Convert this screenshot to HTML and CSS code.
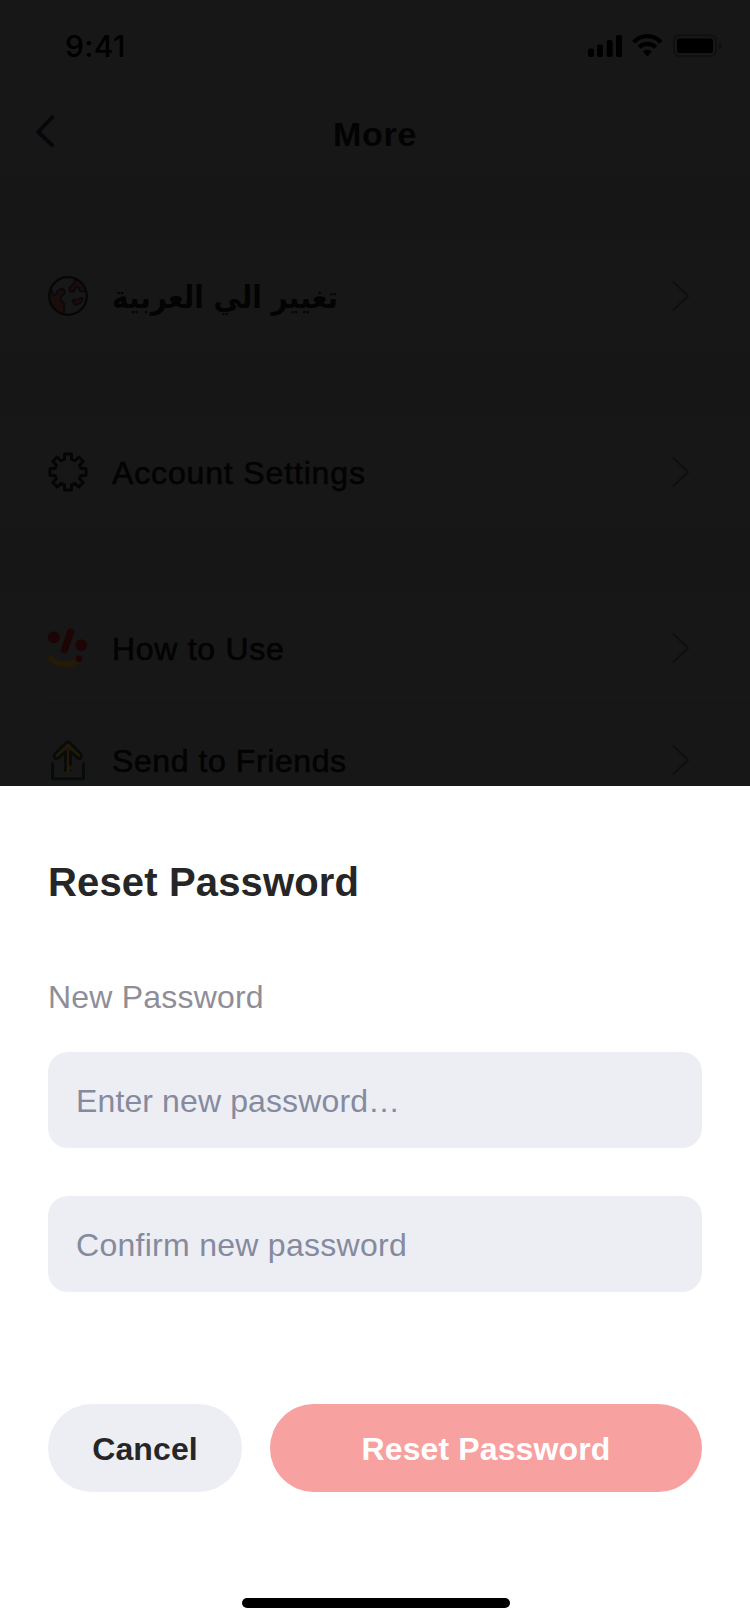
FILE: index.html
```html
<!DOCTYPE html>
<html lang="en">
<head>
<meta charset="utf-8">
<title>More</title>
<link rel="stylesheet" href="styles.css">
</head>
<body>
<div class="screen">
  <main class="page">
    <header class="top">
      <div class="status">
        <span class="time">9:41</span>
        <svg class="status-icons" width="136" height="24" viewBox="0 0 136 24">
          <rect x="0" y="14.5" width="6" height="8.5" rx="2"/>
          <rect x="9" y="10.5" width="6" height="12.5" rx="2"/>
          <rect x="18.700" y="6" width="6" height="17" rx="2"/>
          <rect x="28" y="1" width="6" height="22" rx="2"/>
          <g class="wifi">
            <path d="M45.700 8.200C53.500 .2 65.200 .2 73 8.200"/>
            <path d="M51 13.300C55.600 8.800 63.100 8.800 67.700 13.300"/>
          </g>
          <path d="M54.800 17.300C57.300 15.100 61.400 15.100 63.900 17.300L59.350 22.600Z"/>
          <rect class="shell" x="86" y="1.200" width="42" height="21" rx="5.500"/>
          <rect x="89" y="4.500" width="36" height="14.500" rx="2.500"/>
          <path class="cap" d="M131 8.200Q133.500 9.500 133.500 11.800T131 15.400Z"/>
        </svg>
      </div>
      <div class="nav">
        <svg class="back" width="20" height="34" viewBox="0 0 20 34"><path d="M16.200 2.200L2.200 17L16.200 30.200"/></svg>
        <h1 class="nav-title">More</h1>
      </div>
    </header>

    <section class="group">
      <div class="row">
        <svg class="icon" width="42" height="42" viewBox="0 -1 42 42">
          <g fill="#1c0d0c" stroke-linejoin="round" stroke-linecap="round">
            <path d="M4 15C4 20 8.500 19.500 9 16.500S13.500 12 15.500 13.500S17 18 14.500 19.500S11.500 24.500 14.500 26S16.500 28.500 16 31S17 35 16 37C8 35 2.500 28 2.500 21Z"/>
            <path d="M27 3.500C28 7.500 21.500 9.500 21.300 13C21.500 17 27 16.500 26.500 13C29 9.500 31.500 11.500 31.500 14C33 17.500 35.500 14 37 15.500C35.500 9.500 32 5.500 27 3.500Z"/>
            <g class="coast">
              <path d="M4 15C4 20 8.500 19.500 9 16.500S13.500 12 15.500 13.500S17 18 14.500 19.500S11.500 24.500 14.500 26S16.500 28.500 16 31S17 35 16 36"/>
              <path d="M27 4C28 7.500 21.500 9.500 21.300 13C21.500 17 27 16.500 26.500 13C29 9.500 31.500 11.500 31.500 14C33 17.500 35.500 14 36.500 15.500"/>
              <path d="M24.500 24.500C26 22.500 28.500 25 31 23C33.500 21 36 22.500 34 24.500C31 29.500 27 29.500 25.500 27Z"/>
            </g>
          </g>
          <circle cx="20" cy="20" r="18.800" fill="none" stroke="#060607" stroke-width="2.200"/>
        </svg>
        <span class="label arabic" lang="ar" dir="rtl">تغيير الي العربية</span>
        <svg class="chevron" width="18" height="32" viewBox="0 0 18 32"><path d="M1 1.500L16 16L1 30.500"/></svg>
      </div>
    </section>

    <section class="group">
      <div class="row">
        <svg class="icon" width="42" height="42" viewBox="0 -1 42 42">
          <circle cx="20" cy="20" r="9.500" fill="none" stroke="#14171a" stroke-width="1.500"/>
          <path d="M16.500 2H23.500V7.200L27 8.700L30.800 5L35.200 9.500L31.500 13.200L33 16.600H38V23.400H33L31.500 26.800L35.200 30.500L30.800 35L27 31.300L23.500 32.800V38H16.500V32.800L13 31.300L9.200 35L4.800 30.500L8.500 26.800L7 23.400H2V16.600H7L8.500 13.200L4.800 9.500L9.200 5L13 8.700L16.500 7.200Z" fill="none" stroke="#050505" stroke-width="3" stroke-linejoin="round"/>
        </svg>
        <span class="label wide">Account Settings</span>
        <svg class="chevron" width="18" height="32" viewBox="0 0 18 32"><path d="M1 1.500L16 16L1 30.500"/></svg>
      </div>
    </section>

    <section class="group">
      <div class="row divided">
        <svg class="icon" width="42" height="42" viewBox="0 0 42 42">
          <g fill="#1d0405" stroke="#1d0405" stroke-linecap="round">
            <path d="M3 31.500C11 39.500 22 39.500 30.500 32" fill="none" stroke="#241a05" stroke-width="6"/>
            <circle cx="5.900" cy="10.400" r="5.900" stroke="none"/>
            <circle cx="33.300" cy="18.200" r="5.800" stroke="none"/>
            <circle cx="31" cy="31.700" r="3.300" stroke="none"/>
            <path d="M22.700 5L16.500 22.600" stroke-width="7"/>
          </g>
        </svg>
        <span class="label">How to Use</span>
        <svg class="chevron" width="18" height="32" viewBox="0 0 18 32"><path d="M1 1.500L16 16L1 30.500"/></svg>
      </div>
      <div class="row">
        <svg class="icon" width="42" height="42" viewBox="0 -.8 42 42">
          <path d="M19.900 13V31M8.500 15L19.900 4L31.500 15" fill="none" stroke="#251b05" stroke-width="4.500" stroke-linecap="round"/>
          <g fill="none" stroke="#070b0b" stroke-width="2.800" stroke-linejoin="round" stroke-linecap="round">
            <path d="M17.400 31V12L10 18.500C7 19.800 5 16.500 7 14L18.200 3Q20 1.400 21.700 3L32.800 14C34.500 16.500 32.500 19.800 30 18.500L22.500 12V25"/>
            <path d="M4.500 23.500V39H35.500V23.500"/>
          </g>
          <circle cx="22.500" cy="30.700" r="1.100" fill="#070b0b"/>
        </svg>
        <span class="label narrow">Send to Friends</span>
        <svg class="chevron" width="18" height="32" viewBox="0 0 18 32"><path d="M1 1.500L16 16L1 30.500"/></svg>
      </div>
    </section>
  </main>

  <section class="sheet">
    <h2 class="sheet-title">Reset Password</h2>
    <div class="caption">New Password</div>
    <div class="field"><span class="hint-enter">Enter new password…</span></div>
    <div class="field"><span class="hint-confirm">Confirm new password</span></div>
    <div class="actions">
      <button class="button cancel">Cancel</button>
      <button class="button primary">Reset Password</button>
    </div>
    <div class="home-bar"></div>
  </section>
</div>
</body>
</html>
```
FILE: styles.css
```css
* { box-sizing: border-box; }
body {
  margin: 0;
  font-family: "Liberation Sans", Arial, sans-serif;
  background: #fff;
}
h1, h2 { margin: 0; }
svg { display: block; flex: none; overflow: visible; }

.screen {
  width: 750px;
  height: 1624px;
  display: flex;
  flex-direction: column;
  overflow: hidden;
}

.page {
  height: 786px;
  flex: none;
  overflow: hidden;
  background: #161616;
  color: #030303;
}
.top { height: 176px; margin-bottom: 64px; background: #171717; }
.status {
  height: 88px;
  padding: 4px 26px 0 65px;
  display: flex;
  align-items: center;
  justify-content: space-between;
}
.time {
  padding-bottom: 1px;
  font: 500 30px/36px Inter, "Liberation Sans", sans-serif;
  letter-spacing: .4px;
  color: #000;
}
.status-icons { fill: #000; }
.wifi { fill: none; stroke: #000; stroke-width: 4.2; }
.shell { fill: none; stroke: #101010; stroke-width: 2; }
.cap { fill: #0f0f0f; }

.nav {
  height: 88px;
  padding: 0 36px;
  display: grid;
  grid-template-columns: 20px 1fr 20px;
  align-items: center;
}
.back path, .chevron path { fill: none; stroke: #06070a; stroke-width: 3.8; stroke-linecap: round; stroke-linejoin: round; }
.nav-title {
  padding-top: 4px;
  text-align: center;
  font-size: 34px;
  line-height: 40px;
  letter-spacing: .7px;
}

.group { margin-bottom: 64px; background: #171717; }
.row {
  height: 112px;
  padding: 0 60px 0 48px;
  display: flex;
  align-items: center;
}
.divided { background: linear-gradient(#151515, #151515) 48px 111px / 702px 1px no-repeat; }
.coast { stroke: #0a0a0a; stroke-width: 2; }
.coast path:not(:last-child) { fill: none; }
.label {
  flex: 1;
  margin-left: 22px;
  padding-top: 2px;
  font-size: 32px;
  line-height: 40px;
  letter-spacing: .7px;
  -webkit-text-stroke: .6px #030303;
}
.wide { letter-spacing: .85px; }
.narrow { letter-spacing: .58px; }
.arabic {
  flex: none;
  margin-right: auto;
  text-align: right;
  font: 700 31px/44px "DejaVu Sans Condensed", "DejaVu Sans", sans-serif;
  font-stretch: condensed;
  letter-spacing: 0;
  -webkit-text-stroke: 0;
}
.chevron path { stroke: #0f0f0f; stroke-width: 2; stroke-linecap: butt; stroke-linejoin: miter; }

.sheet {
  flex: 1;
  padding: 74px 48px 16px;
  display: flex;
  flex-direction: column;
  background: #fff;
}
.sheet-title { color: #262626; font-size: 40px; line-height: 44px; letter-spacing: .15px; }
.caption { margin: 73px 0 35px; color: #8f8e98; font-size: 32px; line-height: 40px; letter-spacing: .2px; }
.field {
  height: 96px;
  flex: none;
  padding: 2px 28px 0;
  margin-bottom: 48px;
  display: flex;
  align-items: center;
  border-radius: 20px;
  background: #edeef4;
  color: #858a9e;
  font-size: 32px;
  white-space: nowrap;
}
.hint-enter { letter-spacing: .12px; }
.hint-confirm { letter-spacing: .28px; }
.actions {
  height: 88px;
  margin-top: 64px;
  display: grid;
  grid-template-columns: 194px 1fr;
  gap: 28px;
}
.button {
  border: 0;
  padding: 2px 0 0;
  border-radius: 44px;
  font: 700 32px/40px "Liberation Sans", Arial, sans-serif;
  letter-spacing: .12px;
}
.cancel { background: #edeef4; color: #262626; }
.primary { background: #f7a1a0; color: #fff; }
.home-bar {
  width: 268px;
  height: 10px;
  margin: auto 0 0 194px;
  border-radius: 5px;
  background: #000;
}
```
